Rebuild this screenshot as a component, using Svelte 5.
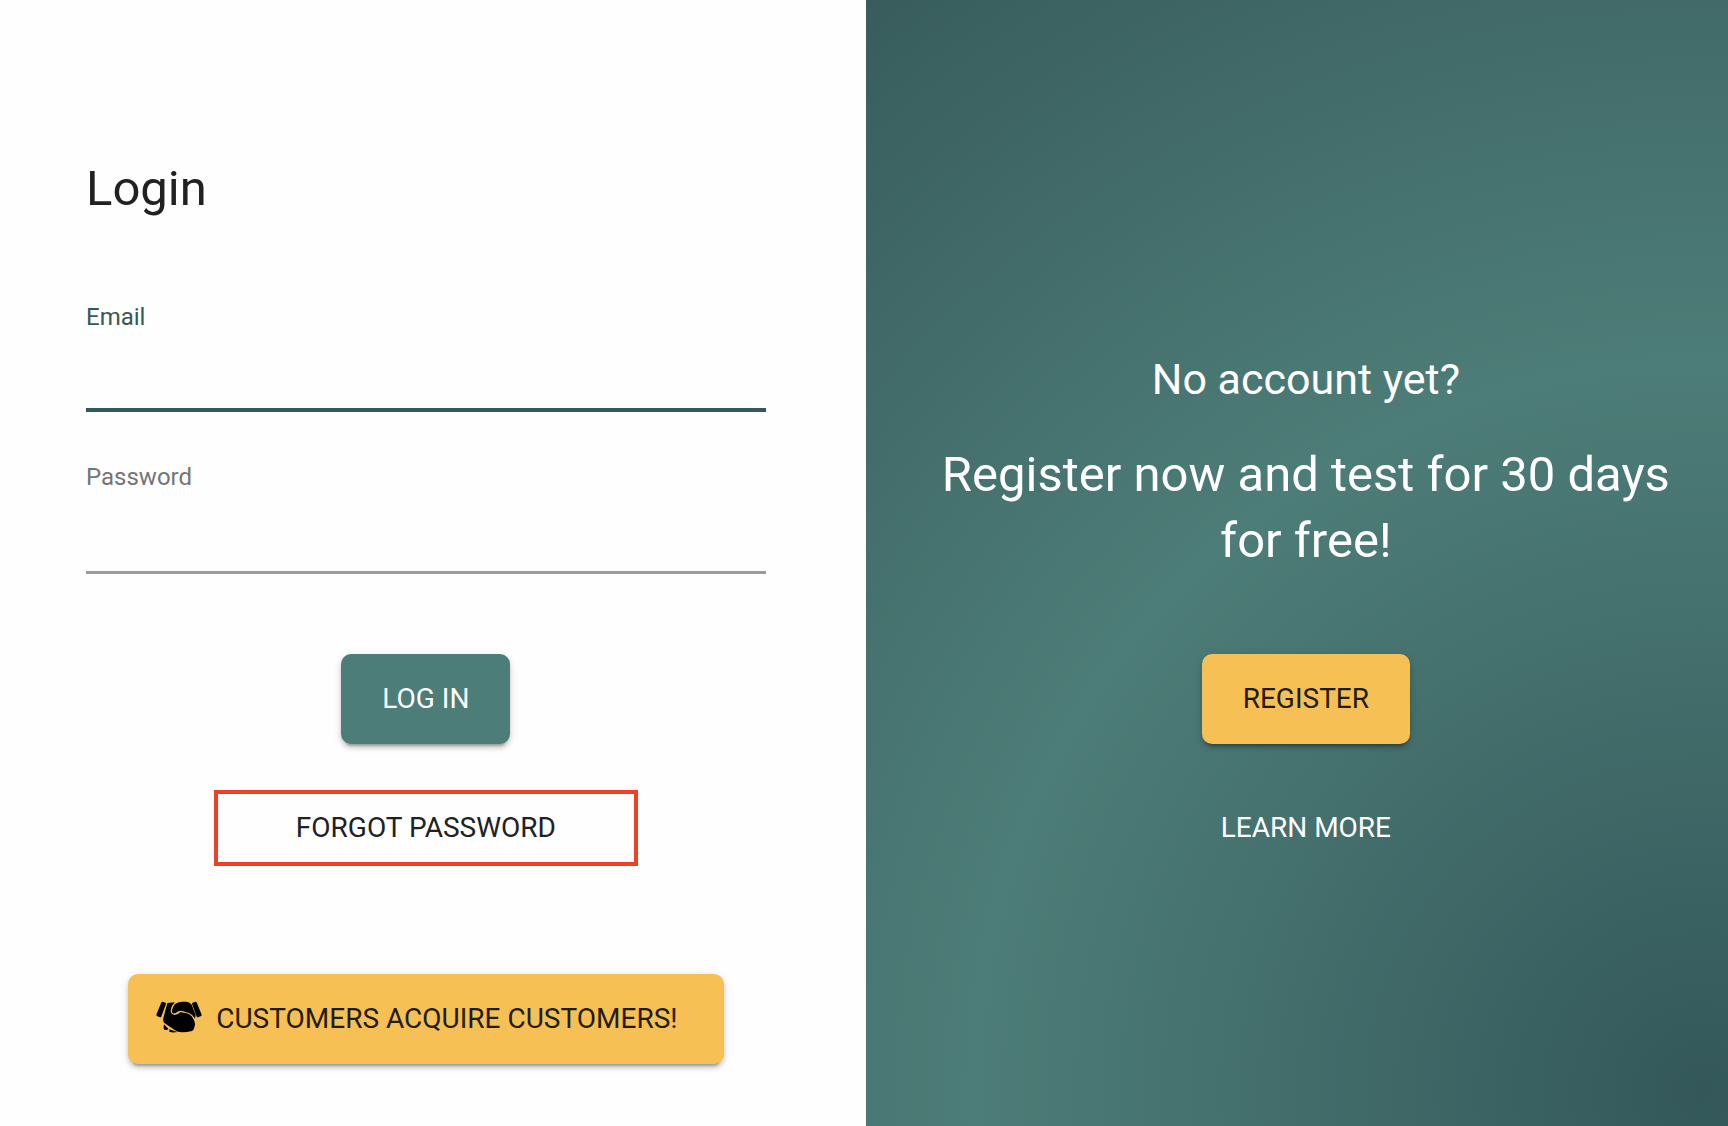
<script>
	let email = '';
	let password = '';
	let emailInput;

	function login() {
		if (!email) emailInput.focus();
	}
</script>

<div class="page">
	<main class="login">
		<h1>Login</h1>
		<form on:submit|preventDefault={login}>
			<div class="field active">
				<label for="email">Email</label>
				<input id="email" type="email" autocomplete="email" bind:this={emailInput} bind:value={email} />
			</div>
			<div class="field">
				<label for="password">Password</label>
				<input id="password" type="password" autocomplete="current-password" bind:value={password} />
			</div>
			<button class="btn primary" type="submit">LOG IN</button>
		</form>
		<a class="forgot" href="#forgot">FORGOT PASSWORD</a>
		<button class="btn accent customers" type="button">
			<svg viewBox="0 0 138 96" aria-hidden="true">
				<path class="cuff" d="M19 5 27 8 13 46 4 42zM119 5 111 8 125 46 134 42z" />
				<path
					d="M34 6 56 4Q46 14 44 28q0 13 12 14 8 0 18-9 8 3 16 3 12 2 17 10 8 10 10 22 0 6-3 14 0 5-6 8-15 4-31 4-12 0-21-7L24 65q-4-6-2-14z"
				/>
				<path d="M57 9Q65 3 78 2h14q10 1 15 9l12 31-2 11q-7-12-18-17-11-3-23-7-9 0-16 6-6 4-10 1-4-3-1-11 2-9 8-16z" />
				<path d="M24 70 37 83q-1 3-5 4l-8-1q-3-6 0-16zM40 85l24 8q-14 3-24-1z" />
			</svg>
			CUSTOMERS ACQUIRE CUSTOMERS!
		</button>
	</main>

	<aside class="register">
		<h2>No account yet?</h2>
		<p>Register now and test for 30 days for free!</p>
		<button class="btn accent" type="button">REGISTER</button>
		<a class="more" href="#more">LEARN MORE</a>
	</aside>
</div>

<style>
	:global(body) {
		margin: 0;
		background: #fefefe;
		font-family: Roboto, 'Liberation Sans', sans-serif;
	}

	.page {
		display: grid;
		grid-template-columns: 50.1% 1fr;
		min-height: 100vh;
		color: #212121;
	}

	.login,
	.register {
		box-sizing: border-box;
		display: flex;
		flex-direction: column;
		align-items: center;
	}

	.login {
		padding: 156px 100px 60px 86px;
	}

	h1,
	h2,
	p {
		margin: 0;
		font-weight: 400;
	}

	h1 {
		align-self: flex-start;
		font-size: 49px;
		line-height: 66px;
	}

	form {
		display: flex;
		flex-direction: column;
		align-items: center;
		width: 100%;
		margin-top: 80px;
	}

	.field {
		display: flex;
		flex-direction: column;
		width: 100%;
		margin-bottom: 50px;
	}

	.field label {
		font-size: 24px;
		line-height: 30px;
		color: #757575;
	}

	.field input {
		height: 82px;
		padding: 16px 0;
		box-sizing: border-box;
		border: 0;
		border-bottom: 3px solid #9c9c9c;
		outline: 0;
		border-radius: 0;
		background: none;
		font: 32px Roboto, sans-serif;
		color: inherit;
	}

	.field.active label {
		color: #35595a;
	}

	.field.active input {
		height: 80px;
		border-bottom: 4px solid #35595a;
	}

	.btn {
		display: flex;
		align-items: center;
		justify-content: center;
		height: 90px;
		padding: 0 41px;
		border: 0;
		border-radius: 10px;
		box-shadow:
			0 6px 2px -4px rgba(0, 0, 0, 0.2),
			0 4px 4px rgba(0, 0, 0, 0.14),
			0 2px 10px rgba(0, 0, 0, 0.12);
		font: 28px/40px Roboto, sans-serif;
		cursor: pointer;
	}

	.primary {
		margin-top: 30px;
		background: #4d7d78;
		color: #fff;
	}

	.accent {
		background: #f6c055;
		color: #211c0e;
	}

	.forgot,
	.more {
		font-size: 28px;
		line-height: 68px;
		color: inherit;
		text-decoration: none;
	}

	.forgot {
		margin-top: 46px;
		padding: 0 78px;
		border: 4px solid #ee4027;
	}

	.customers {
		margin-top: 108px;
		padding-left: 28px;
		padding-right: 46px;
		gap: 14px;
	}

	.customers svg {
		width: 46px;
		height: 32px;
		margin-bottom: 4px;
	}

	.cuff {
		stroke: #000;
		stroke-width: 6;
		stroke-linejoin: round;
	}

	.register {
		padding: 350px 50px 60px 68px;
		background: radial-gradient(circle at 97% 97%, #34585a 0%, #4d7d78 53%, #385c5c 100%);
		color: #fff;
		text-align: center;
	}

	h2 {
		font-size: 43px;
		line-height: 58px;
	}

	p {
		margin-top: 34px;
		font-size: 49px;
		line-height: 66px;
	}

	.register .btn {
		margin-top: 80px;
	}

	.more {
		margin-top: 50px;
	}
</style>
